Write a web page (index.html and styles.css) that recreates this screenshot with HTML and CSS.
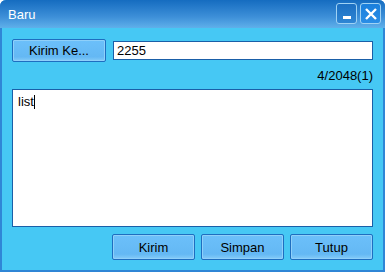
FILE: index.html
```html
<!DOCTYPE html>
<html lang="id">
<head>
  <meta charset="UTF-8">
  <title>Baru</title>
  <link rel="stylesheet" href="styles.css">
</head>
<body>
  <div class="window">
    <div class="titlebar">
      <span class="title">Baru</span>
      <div class="controls">
        <button class="ctl min"><span class="bar"></span></button>
        <button class="ctl close">
          <svg width="14" height="14" viewBox="0 0 14 14"><path d="M2 2 L12 12 M12 2 L2 12" stroke="#fff" stroke-width="2.4"/></svg>
        </button>
      </div>
    </div>
    <div class="content">
      <div class="row">
        <button class="btn to">Kirim Ke...</button>
        <div class="field">2255</div>
      </div>
      <div class="counter">4/2048(1)</div>
      <div class="message">list<span class="caret"></span></div>
      <div class="actions">
        <button class="btn">Kirim</button>
        <button class="btn">Simpan</button>
        <button class="btn">Tutup</button>
      </div>
    </div>
  </div>
</body>
</html>
```

FILE: styles.css
```css
body {
  margin: 0;
  background: #fff;
  font-family: "Liberation Sans", Arial, sans-serif;
  font-size: 13px;
}
.window {
  width: 385px;
  height: 272px;
  box-sizing: border-box;
  background: #46c8f4;
  border: 2px solid #2f86d6;
  border-top: none;
  border-radius: 6px 6px 0 0;
  display: flex;
  flex-direction: column;
}
.titlebar {
  height: 28px;
  margin: 0 -2px;
  border-radius: 6px 6px 0 0;
  background: linear-gradient(#156cc0, #3d8fd8 60%, #5fb0ea);
  display: flex;
  align-items: center;
  justify-content: space-between;
  padding: 0 4px 0 8px;
  box-sizing: border-box;
}
.title {
  color: #fff;
  font-size: 13px;
}
.controls {
  display: flex;
  gap: 3px;
  margin-top: -1px;
}
.ctl {
  width: 21px;
  height: 21px;
  padding: 0;
  border: 1px solid #9fd2f4;
  border-radius: 3px;
  display: flex;
  align-items: center;
  justify-content: center;
}
.ctl.min {
  background: linear-gradient(#1b6fc2, #2f86d4);
}
.ctl.min .bar {
  width: 8px;
  height: 3px;
  background: #fff;
  margin-top: 8px;
}
.ctl.close {
  background: linear-gradient(#1a7fdc, #2a8ee6);
}
.content {
  flex: 1;
  padding: 11px 10px 0 10px;
  display: flex;
  flex-direction: column;
}
.row {
  display: flex;
  align-items: center;
  gap: 7px;
  height: 23px;
}
.btn {
  font-family: "Liberation Sans", Arial, sans-serif;
  font-size: 13px;
  color: #000;
  border: 1px solid #1e6ec0;
  border-radius: 2px;
  background: linear-gradient(#6cc0fa, #64b8f4 80%, #86ccf8);
  box-shadow: inset 0 0 0 1px #8fd0fa;
  padding: 0;
}
.btn.to {
  width: 94px;
  height: 23px;
}
.field {
  flex: 1;
  height: 19px;
  box-sizing: border-box;
  background: #fff;
  border: 1px solid #1a5fa8;
  padding: 1px 3px;
  line-height: 15px;
}
.counter {
  margin-top: 6px;
  height: 16px;
  line-height: 16px;
  text-align: right;
}
.message {
  margin-top: 5px;
  height: 138px;
  box-sizing: border-box;
  background: #fff;
  border: 1px solid #1a5fa8;
  padding: 4px 5px;
  line-height: 15px;
}
.caret {
  display: inline-block;
  width: 1px;
  height: 14px;
  background: #000;
  vertical-align: -3px;
}
.actions {
  margin-top: 7px;
  display: flex;
  justify-content: flex-end;
  gap: 6px;
}
.actions .btn {
  width: 83px;
  height: 26px;
}
```
